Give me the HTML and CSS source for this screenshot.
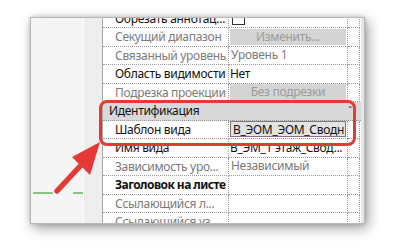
FILE: index.html
```html
<!DOCTYPE html>
<html lang="ru">
<head>
<meta charset="utf-8">
<title>Свойства</title>
<link rel="stylesheet" href="styles.css">
</head>
<body>
<div class="stage">
  <div class="window">
    <div class="canvas-pane"></div>
    <div class="strip"></div>
    <div class="props">
      <div class="rows">
        <div class="row"><div class="name dark">Обрезать аннотац...</div><div class="val"><span class="check"></span></div><div class="extra"></div></div>
        <div class="row"><div class="name">Секущий диапазон</div><div class="val"><span class="btn">Изменить...</span></div><div class="extra"></div></div>
        <div class="row"><div class="name">Связанный уровень</div><div class="val muted">Уровень 1</div><div class="extra"></div></div>
        <div class="row"><div class="name dark">Область видимости</div><div class="val">Нет</div><div class="extra"></div></div>
        <div class="row"><div class="name">Подрезка проекции</div><div class="val"><span class="btn">Без подрезки</span></div><div class="extra"></div></div>
        <div class="row group"><div class="group-title">Идентификация</div><div class="group-icon">ˆ</div></div>
        <div class="row"><div class="name dark">Шаблон вида</div><div class="val"><span class="field">В_ЭОМ_ЭОМ_Сводн</span></div><div class="extra"></div></div>
        <div class="row"><div class="name dark">Имя вида</div><div class="val">В_ЭМ_1 этаж_Свод...</div><div class="extra"></div></div>
        <div class="row"><div class="name">Зависимость уро...</div><div class="val muted">Независимый</div><div class="extra"></div></div>
        <div class="row"><div class="name dark bold">Заголовок на листе</div><div class="val"></div><div class="extra"></div></div>
        <div class="row"><div class="name">Ссылающийся л...</div><div class="val"></div><div class="extra"></div></div>
        <div class="row"><div class="name">Ссылающийся уз...</div><div class="val"></div><div class="extra"></div></div>
      </div>
    </div>
    <div class="scroll"></div>
  </div>
</div>
<svg class="overlay" width="394" height="248" viewBox="0 0 394 248">
  <line x1="33" y1="193" x2="53" y2="193" stroke="#58b04f" stroke-width="1.4"/>
  <line x1="73" y1="193" x2="83" y2="193" stroke="#58b04f" stroke-width="1.4"/>
  <line x1="57" y1="191" x2="83" y2="163" stroke="#e53935" stroke-width="5.5" stroke-linecap="round"/>
  <polygon points="100,142 72,157 90,175" fill="#e53935"/>
</svg>
<div class="highlight"></div>
</body>
</html>
```

FILE: styles.css
```css
html, body {
  margin: 0;
  padding: 0;
  background: #ffffff;
}

body {
  width: 394px;
  height: 248px;
  overflow: hidden;
  position: relative;
  font-family: "Noto Sans", "Open Sans", sans-serif;
  font-size: 12px;
  letter-spacing: -0.3px;
  color: #1a1a1a;
}

.stage {
  padding: 17px 0 0 30px;
}

.window {
  width: 335px;
  height: 207px;
  box-sizing: border-box;
  border: 1px solid #b9b9b9;
  display: flex;
  overflow: hidden;
  background: #ffffff;
  box-shadow: 3px 4px 12px rgba(0, 0, 0, 0.38), 0 0 4px rgba(0, 0, 0, 0.18);
}

.canvas-pane {
  width: 52px;
  flex: none;
  background: #f5f5f5;
  border-right: 1px solid #ffffff;
}

.strip {
  width: 18px;
  flex: none;
  background: #eeeeee;
  border-right: 1px solid #a9a9a9;
}

.props {
  width: 258px;
  flex: none;
  overflow: hidden;
}

.scroll {
  flex: 1;
  background: #e6e6e6;
}

.rows {
  margin-top: -8.5px;
}

.row {
  display: flex;
  height: 18.5px;
  line-height: 18px;
}

.name {
  width: 126px;
  flex: none;
  box-sizing: border-box;
  padding-left: 12px;
  color: #7a7a7a;
  white-space: nowrap;
  overflow: hidden;
  border-right: 1px dotted #9a9a9a;
  border-bottom: 1px dotted #9a9a9a;
}

.name.dark {
  color: #111111;
}

.name.bold {
  font-weight: 700;
  letter-spacing: -0.55px;
}

.val {
  width: 119px;
  flex: none;
  box-sizing: border-box;
  padding: 0 1px 0 1px;
  color: #111111;
  white-space: nowrap;
  overflow: hidden;
  border-right: 1px dotted #9a9a9a;
  border-bottom: 1px dotted #9a9a9a;
  display: flex;
  align-items: center;
}

.val.muted {
  color: #7a7a7a;
  padding-left: 2px;
}

.extra {
  width: 12px;
  flex: none;
  box-sizing: border-box;
  border-right: 1px dotted #9a9a9a;
  border-bottom: 1px dotted #9a9a9a;
}

.check {
  width: 11px;
  height: 11px;
  margin-left: 2px;
  border: 1px solid #333333;
  background: #ffffff;
}

.btn {
  flex: 1;
  height: 16px;
  line-height: 16px;
  background: #d4d4d4;
  color: #9c9c9c;
  text-align: center;
}

.field {
  flex: 1;
  height: 16px;
  line-height: 15px;
  box-sizing: border-box;
  border: 1px solid #7a7a7a;
  background: #e3e3e3;
  color: #111111;
  padding-left: 2px;
}

.row.group {
  background: #d9d9d9;
  border-bottom: 1px dotted #9a9a9a;
  box-sizing: border-box;
  justify-content: space-between;
}

.group-title {
  padding-left: 6px;
  color: #111111;
}

.group-icon {
  padding-right: 9px;
  color: #555555;
  font-size: 10px;
}

.overlay {
  position: absolute;
  left: 0;
  top: 0;
  pointer-events: none;
}

.highlight {
  position: absolute;
  left: 99px;
  top: 100px;
  width: 257px;
  height: 46px;
  box-sizing: border-box;
  border: 3.5px solid #e53935;
  border-radius: 8px;
}
```
